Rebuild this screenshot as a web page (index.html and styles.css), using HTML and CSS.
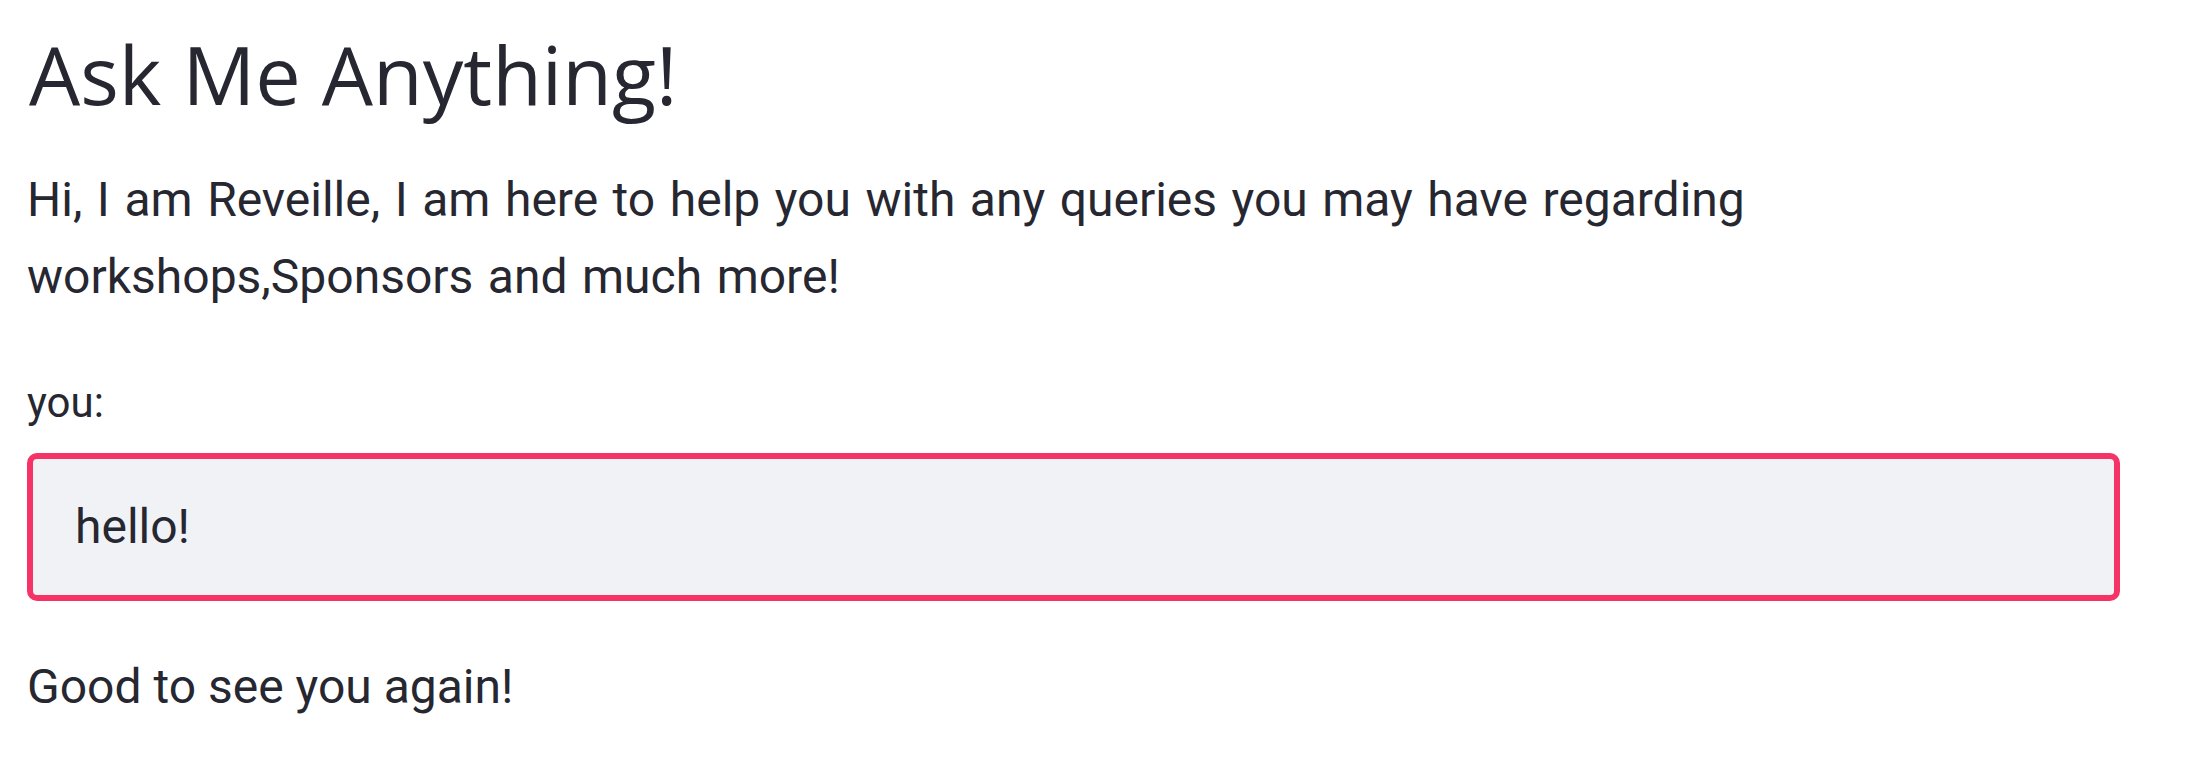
FILE: index.html
```html
<!DOCTYPE html>
<html lang="en">
<head>
<meta charset="utf-8">
<title>Ask Me Anything!</title>
<link rel="stylesheet" href="styles.css">
</head>
<body>
<main class="main">
  <h1 class="title">Ask Me Anything!</h1>
  <p class="intro">Hi, I am Reveille, I am here to help you with any queries you may have regarding workshops,Sponsors and much more!</p>
  <label class="field-label" for="you">you:</label>
  <input class="text-input" id="you" type="text" value="hello!">
  <p class="reply">Good to see you again!</p>
</main>
</body>
</html>
```
FILE: styles.css
```css
html, body {
  margin: 0;
  background: #ffffff;
}
body {
  color: #262730;
  font-family: Roboto, "Liberation Sans", sans-serif;
}
.main {
  display: flex;
  flex-direction: column;
  align-items: stretch;
  width: 2093px;
  padding: 25px 0 0 27px;
}
.title {
  margin: 0 0 0 2px;
  font-family: "Open Sans", sans-serif;
  font-weight: 400;
  font-size: 81px;
  line-height: 97px;
  letter-spacing: 0;
  color: #262730;
}
.intro {
  margin: 40px 0 0 0;
  font-size: 48px;
  line-height: 76.8px;
  word-spacing: 2.6px;
}
.field-label {
  margin-top: 53px;
  font-size: 42px;
  line-height: 67px;
}
.text-input {
  box-sizing: border-box;
  margin-top: 17px;
  width: 100%;
  height: 148px;
  border: 6px solid #f63366;
  border-radius: 10px;
  background: #f0f2f6;
  padding: 0 0 0 42px;
  font-family: Roboto, "Liberation Sans", sans-serif;
  font-size: 48px;
  color: #262730;
  outline: none;
}
.reply {
  margin: 48px 0 0 0;
  font-size: 48px;
  line-height: 76.8px;
}
```
